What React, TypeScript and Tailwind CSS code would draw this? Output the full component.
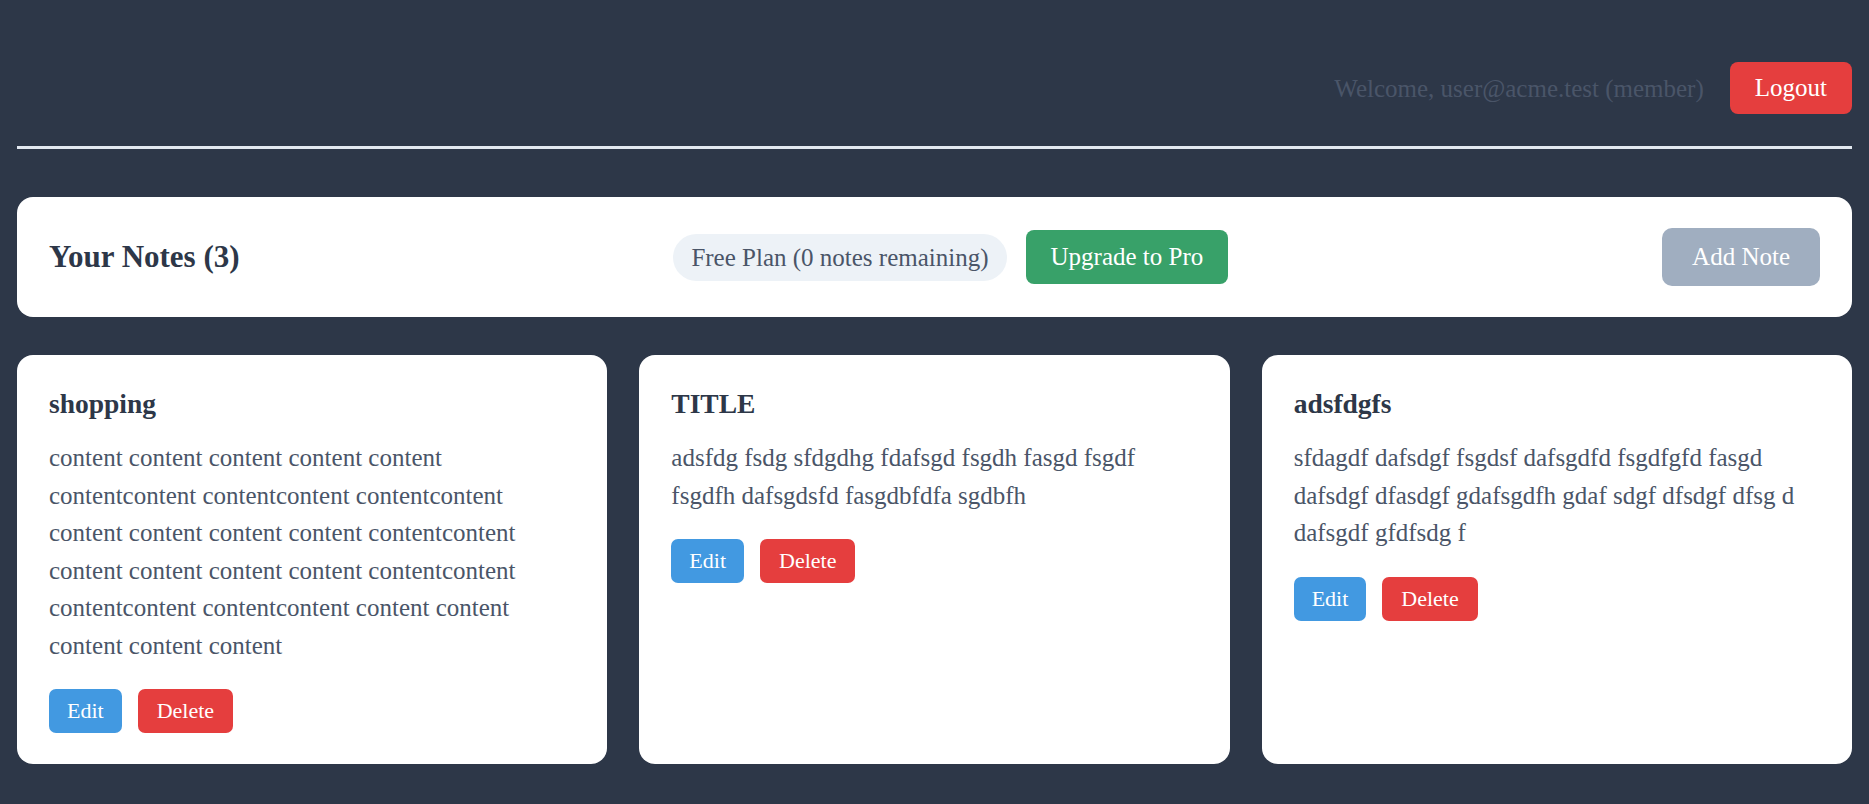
import React from "react";

const notes = [
  {
    title: "shopping",
    content:
      "content content content content content contentcontent contentcontent contentcontent content content content content contentcontent content content content content contentcontent contentcontent contentcontent content content content content content",
  },
  {
    title: "TITLE",
    content: "adsfdg fsdg sfdgdhg fdafsgd fsgdh fasgd fsgdf fsgdfh dafsgdsfd fasgdbfdfa sgdbfh",
  },
  {
    title: "adsfdgfs",
    content:
      "sfdagdf dafsdgf fsgdsf dafsgdfd fsgdfgfd fasgd dafsdgf dfasdgf gdafsgdfh gdaf sdgf dfsdgf dfsg d dafsgdf gfdfsdg f",
  },
];

export default function App() {
  return (
    <div
      className="min-h-[804px] w-full bg-[#2d3748] px-[17px] pb-[40px]"
      style={{ fontFamily: '"Liberation Serif", "Times New Roman", serif' }}
    >
      <header className="flex items-center justify-end gap-[26px] border-b-[3px] border-[#e2e8f0] pt-[62px] pb-[32px]">
        <span className="text-[25px] leading-[29px] text-[#4a5568]">Welcome, user@acme.test (member)</span>
        <button className="rounded-[8px] bg-[#e53e3e] px-[25px] py-[11px] text-[25px] leading-[30px] text-white">
          Logout
        </button>
      </header>

      <section className="mt-[48px] flex items-center justify-between rounded-[16px] bg-white px-[32px] py-[31px]">
        <h2 className="text-[31px] font-bold leading-[36px] text-[#2d3748]">Your Notes (3)</h2>
        <div className="flex items-center gap-[19px]">
          <span className="rounded-full bg-[#edf2f7] px-[18px] py-[9px] text-[25px] leading-[29px] text-[#4a5568]">
            Free Plan (0 notes remaining)
          </span>
          <button className="rounded-[8px] bg-[#38a169] px-[25px] py-[12px] text-[25px] leading-[30px] text-white">
            Upgrade to Pro
          </button>
        </div>
        <button className="rounded-[10px] bg-[#a0aec0] px-[30px] py-[15px] text-[25px] leading-[28px] text-white">
          Add Note
        </button>
      </section>

      <div className="mt-[38px] grid grid-cols-3 gap-[32px]">
        {notes.map((n) => (
          <div key={n.title} className="rounded-[16px] bg-white px-[32px] pt-[33px] pb-[31px]">
            <h3 className="mb-[19px] text-[27.5px] font-bold leading-[32px] text-[#2d3748]">{n.title}</h3>
            <p className="text-[25px] leading-[37.5px] text-[#4a5568]">{n.content}</p>
            <div className="mt-[25px] flex gap-[16px]">
              <button className="rounded-[7px] bg-[#4299e1] px-[18px] py-[9px] text-[22px] leading-[26px] text-white">
                Edit
              </button>
              <button className="rounded-[7px] bg-[#e53e3e] px-[19px] py-[9px] text-[22px] leading-[26px] text-white">
                Delete
              </button>
            </div>
          </div>
        ))}
      </div>
    </div>
  );
}
